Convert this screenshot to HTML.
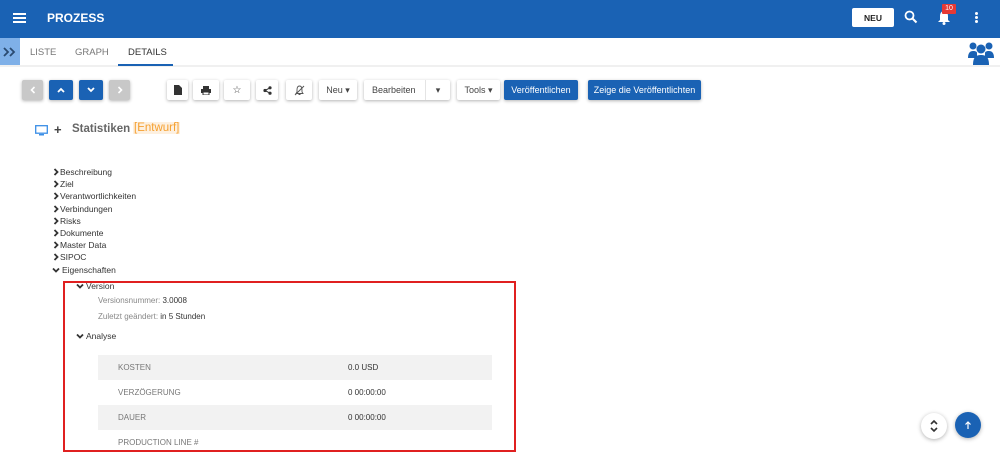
<!DOCTYPE html>
<html><head><meta charset="utf-8"><style>
*{margin:0;padding:0;box-sizing:border-box}
body{width:1000px;height:455px;overflow:hidden;background:#fff;font-family:"Liberation Sans",sans-serif;position:relative;color:#333}
.a{position:absolute}
.hdr{left:0;top:0;width:1000px;height:38px;background:#1a62b4}
.btn{position:absolute;top:80px;height:20px;background:#fff;box-shadow:0 1px 3px rgba(0,0,0,.3);border-radius:2px;font-size:9px;color:#444;display:flex;align-items:center;justify-content:center}
.nav{position:absolute;top:80px;height:20px;border-radius:2px;box-shadow:0 1px 3px rgba(0,0,0,.3);display:flex;align-items:center;justify-content:center}
.tree{position:absolute;left:52px;font-size:8.5px;color:#333}
.tree div{height:12.2px;line-height:12.2px;white-space:nowrap;display:flex;align-items:center}
.cr{display:inline-block;width:8px;height:8px;margin-right:0}
.row{position:absolute;left:98px;width:394px;height:25px;font-size:8px;color:#777;line-height:25px}
.row span{position:absolute;left:20px}
.row b{position:absolute;left:250px;font-weight:normal;color:#333}
</style></head><body>
<svg width="0" height="0" style="position:absolute"><defs>
<symbol id="r" viewBox="0 0 8 8"><path d="M2.5 1l3 3-3 3" stroke="#333" stroke-width="1.8" fill="none"/></symbol>
<symbol id="d" viewBox="0 0 8 8"><path d="M1 2.5l3 3 3-3" stroke="#333" stroke-width="1.8" fill="none"/></symbol>
</defs></svg>
<div class="a hdr"></div>
<div class="a" style="left:13px;top:13px;width:13px;height:2px;background:#fff;box-shadow:0 4px 0 #fff,0 8px 0 #fff"></div>
<div class="a" style="left:47px;top:11px;color:#fff;font-weight:bold;font-size:12px">PROZESS</div>
<div class="a" style="left:852px;top:8px;width:42px;height:19px;background:#fff;border-radius:2px;font-size:8.5px;font-weight:bold;display:flex;align-items:center;justify-content:center;color:#222">NEU</div>
<svg class="a" style="left:904px;top:10px" width="14" height="14" viewBox="0 0 14 14"><circle cx="5.5" cy="5.5" r="4" stroke="#fff" stroke-width="1.8" fill="none"/><line x1="8.5" y1="8.5" x2="12.5" y2="12.5" stroke="#fff" stroke-width="2"/></svg>
<svg class="a" style="left:937px;top:10px" width="14" height="15" viewBox="0 0 14 15"><path d="M7 1C4 1 3 4 3 6v4L1 12h12l-2-2V6c0-2-1-5-4-5z" fill="#fff"/><circle cx="7" cy="13.5" r="1.5" fill="#fff"/></svg>
<div class="a" style="left:942px;top:4px;width:14px;height:10px;background:#e53935;color:#fff;font-size:7px;text-align:center;line-height:10px;border-radius:1px">10</div>
<div class="a" style="left:975px;top:12px;width:3px;height:3px;background:#fff;border-radius:50%;box-shadow:0 4px 0 #fff,0 8px 0 #fff"></div>
<div class="a" style="left:0;top:38px;width:20px;height:28px;background:#7fb0e8"><svg width="20" height="28"><path d="M4 10l4 4-4 4M10 10l4 4-4 4" stroke="#2a4a70" stroke-width="1.8" fill="none"/></svg></div>
<div class="a" style="left:0;top:65px;width:1000px;height:2px;background:#f0f0f0"></div>
<div class="a" style="left:30px;top:47px;font-size:9.5px;color:#777">LISTE</div>
<div class="a" style="left:75px;top:47px;font-size:9.5px;color:#777">GRAPH</div>
<div class="a" style="left:128px;top:47px;font-size:9.5px;color:#333">DETAILS</div>
<div class="a" style="left:118px;top:64px;width:55px;height:2px;background:#1a62b4"></div>
<svg class="a" style="left:968px;top:41px" width="26" height="24" viewBox="0 0 26 24"><g fill="#1a62b4"><circle cx="5" cy="5" r="3.5"/><circle cx="21" cy="5" r="3.5"/><circle cx="13" cy="8" r="4.5"/><path d="M0 17c0-5 2-7 5-7s4 1 4 2v5z"/><path d="M26 17c0-5-2-7-5-7s-4 1-4 2v5z"/><path d="M5 24c0-8 3-10 8-10s8 2 8 10z"/></g></svg>
<div class="nav" style="left:22px;width:21px;background:#c8c8c8"><svg width="6" height="8"><path d="M4.5 1L1.5 4l3 3" stroke="#fff" stroke-width="1.6" fill="none"/></svg></div>
<div class="nav" style="left:49px;width:24px;background:#1a62b4"><svg width="8" height="6"><path d="M1 5l3-3 3 3" stroke="#fff" stroke-width="1.8" fill="none"/></svg></div>
<div class="nav" style="left:79px;width:24px;background:#1a62b4"><svg width="8" height="6"><path d="M1 1l3 3 3-3" stroke="#fff" stroke-width="1.8" fill="none"/></svg></div>
<div class="nav" style="left:109px;width:21px;background:#c8c8c8"><svg width="6" height="8"><path d="M1.5 1l3 3-3 3" stroke="#fff" stroke-width="1.6" fill="none"/></svg></div>
<div class="btn" style="left:167px;width:21px"><svg width="8" height="10"><path d="M0 0h5l3 3v7H0z" fill="#333"/></svg></div>
<div class="btn" style="left:193px;width:26px"><svg width="10" height="9"><rect x="0" y="3" width="10" height="4" fill="#333"/><rect x="2" y="0" width="6" height="3" fill="#333"/><rect x="2" y="6" width="6" height="3" fill="#fff" stroke="#333"/></svg></div>
<div class="btn" style="left:224px;width:26px;font-size:10px">☆</div>
<div class="btn" style="left:256px;width:22px"><svg width="9" height="9"><circle cx="2" cy="4.5" r="1.6" fill="#333"/><circle cx="7" cy="1.8" r="1.6" fill="#333"/><circle cx="7" cy="7.2" r="1.6" fill="#333"/><path d="M2 4.5L7 1.8M2 4.5L7 7.2" stroke="#333"/></svg></div>
<div class="btn" style="left:286px;width:26px"><svg width="11" height="11"><path d="M5.5 1C3.5 1 3 3 3 5v2L2 8.5h7L8 7V5C8 3 7.5 1 5.5 1zM4.5 9.5h2" stroke="#555" fill="none" stroke-width=".9"/><path d="M1 10L10 1" stroke="#555"/></svg></div>
<div class="btn" style="left:319px;width:38px">Neu ▾</div>
<div class="btn" style="left:364px;width:86px;justify-content:flex-start;padding-left:8px">Bearbeiten<span style="position:absolute;left:61px;top:0;height:20px;border-left:1px solid #e4e4e4;width:25px;text-align:center;line-height:20px">▾</span></div>
<div class="btn" style="left:457px;width:43px">Tools ▾</div>
<div class="btn" style="left:504px;width:74px;background:#1a62b4;color:#fff">Veröffentlichen</div>
<div class="btn" style="left:588px;width:113px;background:#1a62b4;color:#fff">Zeige die Veröffentlichten</div>
<svg class="a" style="left:35px;top:125px" width="13" height="11"><rect x=".7" y=".7" width="11.6" height="7.5" fill="none" stroke="#3a8ee6" stroke-width="1.3"/><rect x="4" y="9" width="5" height="1.5" fill="#3a8ee6"/></svg>
<div class="a" style="left:54px;top:122px;font-size:13px;font-weight:bold;color:#444">+</div>
<div class="a" style="left:72px;top:123px;font-size:11.5px;font-weight:bold;color:#666">Statistiken</div>
<div class="a" style="left:133px;top:122px;font-size:11.5px;color:#f5a030;background:#fdf0e0;padding:0 1px">[Entwurf]</div>
<div class="tree" style="top:166px">
<div><svg class="cr"><use href="#r"/></svg>Beschreibung</div><div><svg class="cr"><use href="#r"/></svg>Ziel</div><div><svg class="cr"><use href="#r"/></svg>Verantwortlichkeiten</div><div><svg class="cr"><use href="#r"/></svg>Verbindungen</div><div><svg class="cr"><use href="#r"/></svg>Risks</div><div><svg class="cr"><use href="#r"/></svg>Dokumente</div><div><svg class="cr"><use href="#r"/></svg>Master Data</div><div><svg class="cr"><use href="#r"/></svg>SIPOC</div><div><svg class="cr" style="margin-right:2px"><use href="#d"/></svg>Eigenschaften</div>
</div>
<div class="a" style="left:63px;top:281px;width:453px;height:171px;border:2px solid #e02020"></div>
<div class="a" style="left:76px;top:281px;font-size:8.5px;display:flex;align-items:center"><svg class="cr" style="margin-right:2px"><use href="#d"/></svg>Version</div>
<div class="a" style="left:98px;top:296px;font-size:8px;color:#888">Versionsnummer: <span style="color:#333">3.0008</span></div>
<div class="a" style="left:98px;top:312px;font-size:8px;color:#888">Zuletzt geändert: <span style="color:#333">in 5 Stunden</span></div>
<div class="a" style="left:76px;top:331px;font-size:8.5px;display:flex;align-items:center"><svg class="cr" style="margin-right:2px"><use href="#d"/></svg>Analyse</div>
<div class="row" style="top:355px;background:#f2f2f2"><span>KOSTEN</span><b>0.0 USD</b></div>
<div class="row" style="top:380px"><span>VERZÖGERUNG</span><b>0 00:00:00</b></div>
<div class="row" style="top:405px;background:#f2f2f2"><span>DAUER</span><b>0 00:00:00</b></div>
<div class="row" style="top:430px;height:20px;line-height:25px"><span>PRODUCTION LINE #</span></div>
<div class="a" style="left:921px;top:413px;width:26px;height:26px;border-radius:50%;background:#fff;box-shadow:0 1px 4px rgba(0,0,0,.3)"><svg width="26" height="26"><path d="M10 11l3-3 3 3M10 15l3 3 3-3" stroke="#333" stroke-width="1.6" fill="none"/></svg></div>
<div class="a" style="left:955px;top:412px;width:26px;height:26px;border-radius:50%;background:#1a62b4;box-shadow:0 1px 4px rgba(0,0,0,.3)"><svg width="26" height="26"><path d="M13 17V10M10.5 12.5L13 10l2.5 2.5" stroke="#fff" stroke-width="1.2" fill="none"/></svg></div>
</body></html>
